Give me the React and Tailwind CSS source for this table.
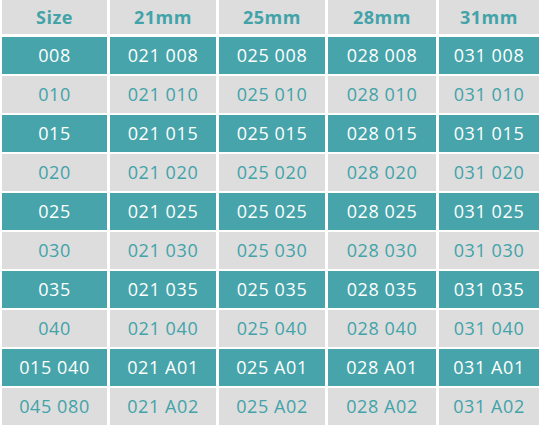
import React from "react";

const header = ["Size", "21mm", "25mm", "28mm", "31mm"];
const rows = [
  ["008", "021 008", "025 008", "028 008", "031 008"],
  ["010", "021 010", "025 010", "028 010", "031 010"],
  ["015", "021 015", "025 015", "028 015", "031 015"],
  ["020", "021 020", "025 020", "028 020", "031 020"],
  ["025", "021 025", "025 025", "028 025", "031 025"],
  ["030", "021 030", "025 030", "028 030", "031 030"],
  ["035", "021 035", "025 035", "028 035", "031 035"],
  ["040", "021 040", "025 040", "028 040", "031 040"],
  ["015 040", "021 A01", "025 A01", "028 A01", "031 A01"],
  ["045 080", "021 A02", "025 A02", "028 A02", "031 A02"],
];

export default function App() {
  return (
    <div
      className="w-[540px] h-[432px] bg-white pl-[2px]"
      style={{ fontFamily: '"Open Sans", sans-serif' }}
    >
      <div className="grid grid-cols-[105px_106px_106px_108px_100px] grid-rows-[35px_repeat(10,37px)] gap-x-[3px] gap-y-[2px]">
        {header.map((h, i) => (
          <div
            key={"h" + i}
            className="flex items-center justify-center bg-[#dddddd] text-[#42a3a9] font-bold text-[18px] tracking-[0.5px] mb-px"
          >
            {h}
          </div>
        ))}
        {rows.map((r, ri) =>
          r.map((c, ci) => (
            <div
              key={ri + "-" + ci}
              className={
                ri % 2 === 0
                  ? "flex items-center justify-center bg-[#46a4aa] text-white text-[18px] tracking-[0.6px] whitespace-pre"
                  : "flex items-center justify-center bg-[#dddddd] text-[#42a3a9] text-[18px] tracking-[0.6px] whitespace-pre"
              }
            >
              {c}
            </div>
          ))
        )}
      </div>
    </div>
  );
}
